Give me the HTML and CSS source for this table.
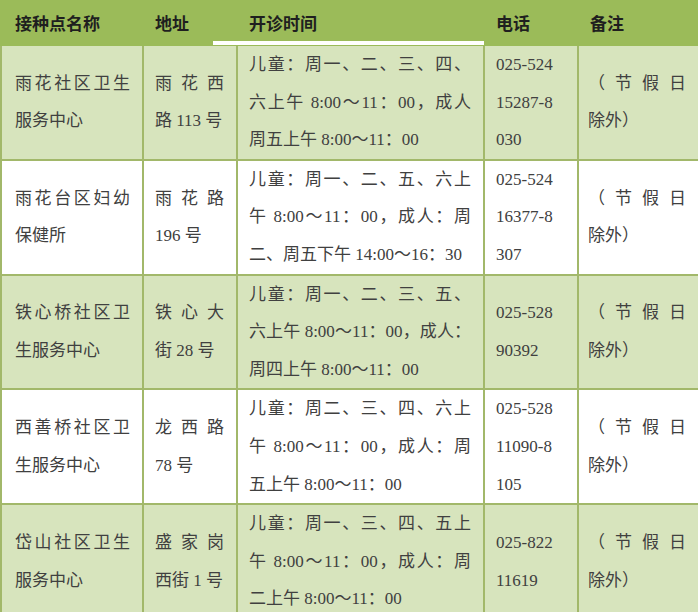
FILE: index.html
```html
<!DOCTYPE html>
<html lang="zh-CN">
<head>
<meta charset="utf-8">
<title>接种点</title>
<link rel="stylesheet" href="styles.css">
</head>
<body>
<table class="sched">
  <colgroup>
    <col class="c-name"><col class="c-addr"><col class="c-time"><col class="c-tel"><col class="c-note">
  </colgroup>
  <thead>
    <tr>
      <th class="first">接种点名称</th>
      <th>地址</th>
      <th class="time-h">开诊时间</th>
      <th>电话</th>
      <th>备注</th>
    </tr>
  </thead>
  <tbody>
    <tr class="alt">
      <td class="first"><span class="j">雨花社区卫生</span>服务中心</td>
      <td><span class="j">雨花西</span>路 113 号</td>
      <td><span class="j">儿童：周一、二、三、四、</span><span class="j">六上午 8:00～11：00，成人</span>周五上午 8:00～11：00</td>
      <td class="tel">025-524<br>15287-8<br>030</td>
      <td class="note"><span class="j">（节假日</span>除外）</td>
    </tr>
    <tr>
      <td class="first"><span class="j">雨花台区妇幼</span>保健所</td>
      <td><span class="j">雨花路</span>196 号</td>
      <td><span class="j">儿童：周一、二、五、六上</span><span class="j">午 8:00～11：00，成人：周</span>二、周五下午 14:00～16：30</td>
      <td class="tel">025-524<br>16377-8<br>307</td>
      <td class="note"><span class="j">（节假日</span>除外）</td>
    </tr>
    <tr class="alt">
      <td class="first"><span class="j">铁心桥社区卫</span>生服务中心</td>
      <td><span class="j">铁心大</span>街 28 号</td>
      <td><span class="j">儿童：周一、二、三、五、</span><span class="j">六上午 8:00～11：00，成人：</span>周四上午 8:00～11：00</td>
      <td class="tel">025-528<br>90392</td>
      <td class="note"><span class="j">（节假日</span>除外）</td>
    </tr>
    <tr>
      <td class="first"><span class="j">西善桥社区卫</span>生服务中心</td>
      <td><span class="j">龙西路</span>78 号</td>
      <td><span class="j">儿童：周二、三、四、六上</span><span class="j">午 8:00～11：00，成人：周</span>五上午 8:00～11：00</td>
      <td class="tel">025-528<br>11090-8<br>105</td>
      <td class="note"><span class="j">（节假日</span>除外）</td>
    </tr>
    <tr class="alt">
      <td class="first"><span class="j">岱山社区卫生</span>服务中心</td>
      <td><span class="j">盛家岗</span>西街 1 号</td>
      <td><span class="j">儿童：周一、三、四、五上</span><span class="j">午 8:00～11：00，成人：周</span>二上午 8:00～11：00</td>
      <td class="tel">025-822<br>11619</td>
      <td class="note"><span class="j">（节假日</span>除外）</td>
    </tr>
  </tbody>
</table>
</body>
</html>
```
FILE: styles.css
```css
html, body {
  margin: 0;
  padding: 0;
  background: #ffffff;
  overflow: hidden;
}

.sched {
  width: 698px;
  border-collapse: collapse;
  table-layout: fixed;
  font-family: "Liberation Serif", "Noto Sans CJK SC", serif;
  font-size: 17px;
  color: #404040;
}

.c-name { width: 142px; }
.c-addr { width: 94px; }
.c-time { width: 247px; }
.c-tel { width: 94px; }
.c-note { width: 121px; }

.sched th {
  background: #9bbb59;
  height: 40px;
  padding: 0 12px 2px 11px;
  text-align: left;
  font-family: "Noto Sans CJK SC", sans-serif;
  font-weight: 700;
  font-size: 17px;
  color: #1f1f1f;
  border: 2px solid #9bbb59;
}

.sched th.first,
.sched td.first {
  padding-left: 13px;
}

.time-h {
  position: relative;
}

.time-h::after {
  content: "";
  position: absolute;
  left: -25px;
  right: -1px;
  bottom: -1px;
  height: 4px;
  background: #ffffff;
}

.sched td {
  border: 2px solid #a2b86a;
  padding: 0 12px 0 11px;
  line-height: 37.6px;
  vertical-align: middle;
  text-align: left;
  background: #ffffff;
}

.sched td.note {
  padding-left: 9px;
  padding-right: 12px;
}

.sched tr.alt td {
  background: #d7e4bd;
}

.j {
  display: block;
  white-space: nowrap;
  text-align: justify;
  text-align-last: justify;
}

.tel {
  white-space: nowrap;
}
```
